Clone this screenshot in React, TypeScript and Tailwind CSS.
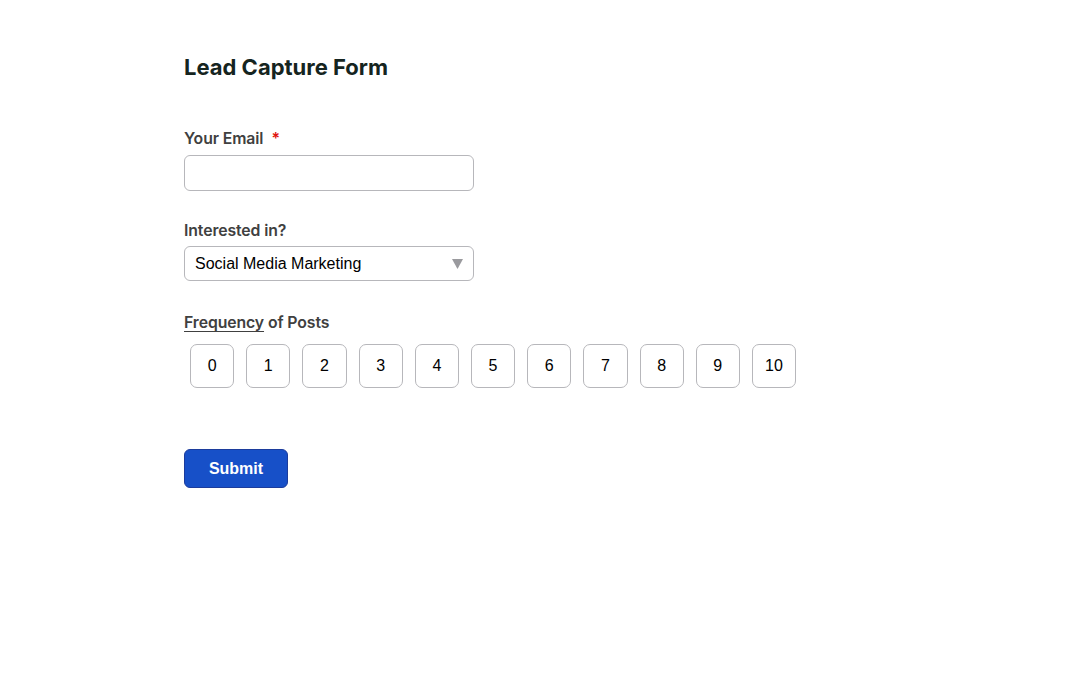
import React from "react";

const sans = "font-['Inter','Noto_Sans',sans-serif]";
const arial = "font-['Liberation_Sans',Arial,sans-serif]";

const scale = [0, 1, 2, 3, 4, 5, 6, 7, 8, 9, 10];

const App = () => {
  return (
    <div className="min-h-screen w-full bg-white">
      <div className="pl-[184px] pt-[52px]">
        <h1 className={`${sans} text-[22px] font-bold leading-[30px] text-[#152420]`}>
          Lead Capture Form
        </h1>

        <div className="mt-[45px]">
          <label className={`${sans} flex items-center text-[15.8px] font-semibold leading-[24px] tracking-[-0.1px] text-[#404040]`}>
            Your Email
            <span className="ml-[8px] text-[#e0140e]">*</span>
          </label>
          <input
            type="email"
            className="mt-[4px] block h-[36px] w-[290px] rounded-[6px] border border-[#b7b7bb] bg-white px-[10px] outline-none"
          />
        </div>

        <div className="mt-[28px]">
          <label className={`${sans} block text-[15.8px] font-semibold leading-[24px] tracking-[-0.1px] text-[#404040]`}>
            Interested in?
          </label>
          <div className="relative mt-[3px] w-[290px]">
            <div
              className={`${arial} flex h-[35px] items-center rounded-[6px] border border-[#b7b7bb] bg-white pl-[10px] text-[16px] text-black`}
            >
              Social Media Marketing
            </div>
            <svg
              className="absolute right-[11px] top-[13px]"
              width="11"
              height="10"
              viewBox="0 0 11 10"
            >
              <path d="M0 0 L11 0 L5.5 10 Z" fill="#9a9a9e" />
            </svg>
          </div>
        </div>

        <div className="mt-[30px]">
          <div className={`${sans} text-[15.8px] font-semibold leading-[24px] tracking-[-0.1px] text-[#404040]`}>
            <span className="underline underline-offset-[3px]">Frequency</span> of Posts
          </div>
          <div className="mt-[9px] flex">
            {scale.map((n) => (
              <button
                key={n}
                className={`${arial} mx-[6px] flex h-[44px] w-[44.2px] items-center justify-center rounded-[7px] border border-[#b7b7bb] bg-white text-[16px] text-black`}
              >
                {n}
              </button>
            ))}
          </div>
        </div>

        <button
          className={`${arial} mt-[61px] flex h-[39px] w-[104px] items-center justify-center rounded-[6px] border border-[#1c3c9c] bg-[#1750c8] text-[16px] font-bold text-white`}
        >
          Submit
        </button>
      </div>
    </div>
  );
};

export default App;
